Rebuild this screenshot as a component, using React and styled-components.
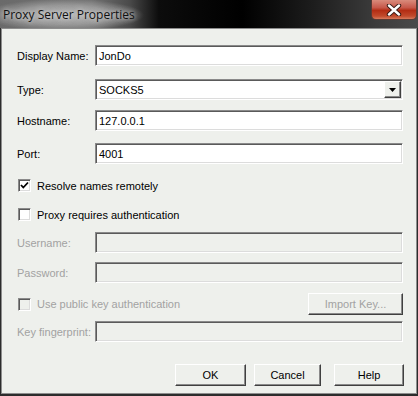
import React from 'react'
import styled, {createGlobalStyle} from 'styled-components'

const GlobalStyle = createGlobalStyle`
    html, body {
        margin: 0;
        padding: 0;
        background: #000;
    }
    * { box-sizing: border-box; }
`

function CloseIcon() {
    return (
        <svg width="16" height="12" viewBox="0 0 16 12">
            <path d="M3 1.5 L13 10.5 M13 1.5 L3 10.5" stroke="#3a1a14" strokeWidth="4.4" strokeLinecap="round"/>
            <path d="M3 1.5 L13 10.5 M13 1.5 L3 10.5" stroke="#fff" strokeWidth="2.4" strokeLinecap="round"/>
        </svg>
    )
}

function Check() {
    return (
        <svg width="9" height="9" viewBox="0 0 9 9">
            <path d="M1 4 L3.3 6.5 L8 1.5" stroke="#000" strokeWidth="1.8" fill="none"/>
        </svg>
    )
}

function Field({label, value, disabled, top, select}) {
    return (
        <Row $top={top}>
            <Label $disabled={disabled}>{label}</Label>
            <Input $disabled={disabled}>
                {value}
                {select && (
                    <DropButton>
                        <svg width="7" height="4" viewBox="0 0 7 4"><path d="M0 0 H7 L3.5 4 Z" fill="#000"/></svg>
                    </DropButton>
                )}
            </Input>
        </Row>
    )
}

function CheckRow({label, checked, disabled, top, children}) {
    return (
        <CheckLine $top={top} $tall={!!children}>
            <Box $disabled={disabled}>{checked && <Check/>}</Box>
            <CheckLabel $disabled={disabled}>{label}</CheckLabel>
            {children}
        </CheckLine>
    )
}

export default function App() {
    return (
        <Window>
            <GlobalStyle/>
            <TitleBar>
                <Title>Proxy Server Properties</Title>
                <CloseButton><CloseIcon/></CloseButton>
            </TitleBar>
            <Client>
                <Field label="Display Name:" value="JonDo" top={16}/>
                <Field label="Type:" value="SOCKS5" top={13} select/>
                <Field label="Hostname:" value="127.0.0.1" top={10}/>
                <Field label="Port:" value="4001" top={12}/>
                <CheckRow label="Resolve names remotely" checked top={15}/>
                <CheckRow label="Proxy requires authentication" top={16}/>
                <Field label="Username:" disabled top={11}/>
                <Field label="Password:" disabled top={9}/>
                <CheckRow label="Use public key authentication" disabled top={10}>
                    <Button $width={95} $disabled>Import Key...</Button>
                </CheckRow>
                <Field label="Key fingerprint:" disabled top={6}/>
                <Footer>
                    <Button $width={71}>OK</Button>
                    <Button $width={67} $space={8}>Cancel</Button>
                    <Button $width={70} $space={13}>Help</Button>
                </Footer>
            </Client>
        </Window>
    )
}

const Window = styled.div`
        width: 418px;
        height: 396px;
        display: flex;
        flex-direction: column;
        background: #2c2c2c;
        padding: 0 1px 2px 1px;
        font-family: "Liberation Sans", Arial, sans-serif;
        font-size: 11px;
`

const TitleBar = styled.div`
        height: 28px;
        margin: 0 -1px;
        display: flex;
        align-items: flex-start;
        justify-content: space-between;
        background:
            radial-gradient(ellipse 80px 16px at 64px 15px, rgba(190,190,190,0.9) 0%, rgba(170,170,170,0.7) 60%, rgba(120,120,120,0) 100%),
            linear-gradient(90deg, #6a6a6a 0%, #727272 22%, #4a4a4a 31%, #0c0c0c 38%, #000 58%, #1d1d1d 75%, #3c3c3c 90%, #4a4a4a 100%);
`

const Title = styled.div`
        margin: 6px 0 0 3px;
        height: 17px;
        line-height: 17px;
        font-family: "Open Sans", "DejaVu Sans", sans-serif;
        font-size: 12px;
        color: #101010;
        text-shadow: 0 0 4px rgba(230,230,230,0.8), 0 0 8px rgba(210,210,210,0.7);
`

const CloseButton = styled.div`
        width: 46px;
        height: 20px;
        margin-right: 1px;
        display: flex;
        align-items: center;
        justify-content: center;
        border: 1px solid #5b3a34;
        border-top: none;
        border-radius: 0 0 5px 5px;
        background: linear-gradient(180deg, #d98b7c 0%, #c7584a 40%, #b32d14 55%, #c24a2c 85%, #d87a5c 100%);
`

const Client = styled.div`
        flex: 1;
        display: flex;
        flex-direction: column;
        background: #eef0ec;
        border: 1px solid #8d8d8d;
        padding: 0 13px 0 15px;
`

const Row = styled.div`
        display: flex;
        align-items: center;
        margin-top: ${p => p.$top}px;
        height: 21px;
`

const Label = styled.div`
        width: 78px;
        flex-shrink: 0;
        color: ${p => p.$disabled ? '#a2a2a2' : '#000'};
`

const Input = styled.div`
        flex: 1;
        height: 21px;
        position: relative;
        display: flex;
        align-items: center;
        padding-left: 3px;
        background: ${p => p.$disabled ? '#eef0ec' : '#fff'};
        border: 1px solid;
        border-color: #8a8a8a #fff #fff #8a8a8a;
        box-shadow: inset 1px 1px #5a5a5a, inset -1px -1px #dcdcdc;
        color: #000;
`

const DropButton = styled.div`
        position: absolute;
        top: 1px;
        right: 1px;
        width: 17px;
        height: 17px;
        display: flex;
        align-items: center;
        justify-content: center;
        background: #eef0ec;
        border: 1px solid;
        border-color: #fff #404040 #404040 #fff;
        box-shadow: inset -1px -1px #8a8a8a;
`

const CheckLine = styled.div`
        display: flex;
        align-items: center;
        margin-top: ${p => p.$top}px;
        height: ${p => p.$tall ? 22 : 13}px;
`

const Box = styled.div`
        width: 13px;
        height: 13px;
        margin-left: 1px;
        display: flex;
        align-items: center;
        justify-content: center;
        background: ${p => p.$disabled ? '#eef0ec' : '#fff'};
        border: 1px solid;
        border-color: #8a8a8a #fff #fff #8a8a8a;
        box-shadow: inset 1px 1px #5a5a5a, inset -1px -1px #dcdcdc;
`

const CheckLabel = styled.div`
        flex: 1;
        margin-left: 6px;
        color: ${p => p.$disabled ? '#a2a2a2' : '#000'};
`

const Button = styled.div`
        width: ${p => p.$width}px;
        height: 22px;
        display: flex;
        align-items: center;
        justify-content: center;
        margin-left: ${p => p.$space || 0}px;
        background: #eef0ec;
        border: 1px solid;
        border-color: #fff #404040 #404040 #fff;
        box-shadow: inset -1px -1px #8a8a8a;
        color: ${p => p.$disabled ? '#a2a2a2' : '#000'};
`

const Footer = styled.div`
        display: flex;
        justify-content: flex-end;
        margin-top: 22px;
        margin-right: -1px;
`
